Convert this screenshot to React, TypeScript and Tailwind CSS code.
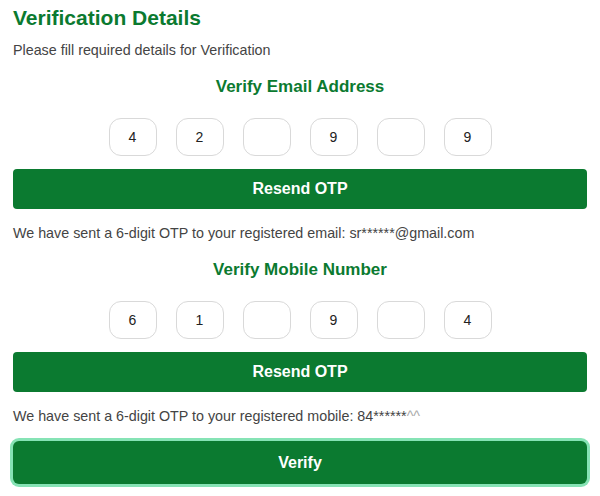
import React from 'react';

const OtpRow: React.FC<{ digits: string[] }> = ({ digits }) => (
  <div className="flex justify-center gap-[19px] mt-[20px]">
    {digits.map((d, i) => (
      <input
        key={i}
        value={d}
        readOnly
        className="w-[48px] h-[38px] rounded-[12px] border border-[#d9d9d9] bg-white text-center text-[14px] text-[#222] outline-none"
      />
    ))}
  </div>
);

const App: React.FC = () => {
  return (
    <div className="w-[600px] h-[496px] bg-white px-[13px] pt-[5px] overflow-hidden" style={{ fontFamily: '"Liberation Sans", Arial, sans-serif' }}>
      <h1 className="text-[21px] font-bold text-[#0b7a30] leading-[26px]">Verification Details</h1>
      <p className="text-[14.3px] text-[#444] mt-[10px] leading-[18px]">Please fill required details for Verification</p>

      <h2 className="text-[17px] font-bold text-[#0b7a30] text-center mt-[17px] leading-[22px]">Verify Email Address</h2>
      <OtpRow digits={['4', '2', '', '9', '', '9']} />
      <button className="w-full h-[40px] mt-[13px] rounded-[4px] bg-[#0b7a30] text-white font-bold text-[16px]">Resend OTP</button>
      <p className="text-[14.3px] text-[#444] mt-[15px] leading-[18px]">We have sent a 6-digit OTP to your registered email: sr******@gmail.com</p>

      <h2 className="text-[17px] font-bold text-[#0b7a30] text-center mt-[17px] leading-[22px]">Verify Mobile Number</h2>
      <OtpRow digits={['6', '1', '', '9', '', '4']} />
      <button className="w-full h-[40px] mt-[13px] rounded-[4px] bg-[#0b7a30] text-white font-bold text-[16px]">Resend OTP</button>
      <p className="text-[14.3px] text-[#444] mt-[15px] leading-[18px]">
        We have sent a 6-digit OTP to your registered mobile: 84******<span className="text-[#aaa]">^^</span>
      </p>

      <button className="w-full h-[43px] mt-[16px] rounded-[6px] bg-[#0b7a30] text-white font-bold text-[16px] ring-[3px] ring-[#86e3b5]">Verify</button>
    </div>
  );
};

export default App;
